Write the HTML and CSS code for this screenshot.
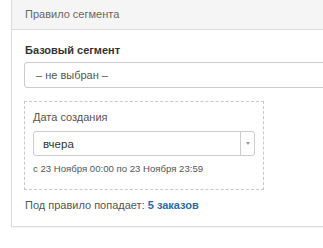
FILE: index.html
```html
<!DOCTYPE html>
<html lang="ru">
<head>
<meta charset="utf-8">
<link rel="stylesheet" href="styles.css">
</head>
<body>
<div class="panel">
  <div class="panel-head">Правило сегмента</div>
  <div class="panel-body">
    <div class="label">Базовый сегмент</div>
    <div class="select select-wide">– не выбран –</div>
    <div class="rule-box">
      <div class="rule-label">Дата создания</div>
      <div class="select select-date">
        <span class="select-value">вчера</span>
        <span class="select-arrow"><span class="tri"></span></span>
      </div>
      <div class="range">с 23 Ноября 00:00 по 23 Ноября 23:59</div>
    </div>
    <div class="summary">Под правило попадает: <a class="count" href="#">5 заказов</a></div>
  </div>
</div>
</body>
</html>
```

FILE: styles.css
```css
html, body {
  margin: 0;
  padding: 0;
  background: #fff;
  overflow: hidden;
}
body {
  font-family: "Liberation Sans", Arial, sans-serif;
  font-size: 11px;
  line-height: 16px;
  color: #333;
  width: 323px;
  height: 248px;
}
.panel {
  margin: -1px 0 0 11px;
  width: 340px;
  border: 1px solid #dcdcdc;
  background: #fff;
  box-shadow: 0 1px 1px rgba(0,0,0,0.04);
}
.panel-head {
  height: 30px;
  box-sizing: border-box;
  padding: 6px 13px 0;
  background: #f5f5f5;
  border-bottom: 1px solid #dcdcdc;
  color: #666;
}
.panel-body {
  padding: 12px 12px 13px 13px;
}
.label {
  font-weight: bold;
  color: #333;
}
.select {
  box-sizing: border-box;
  border: 1px solid #ccc;
  border-radius: 3px;
  background: #fff;
  color: #555;
}
.select-wide {
  margin-top: 4px;
  height: 26px;
  padding: 4px 11px;
  width: 340px;
  margin-left: -1px;
}
.rule-box {
  margin-top: 13px;
  margin-left: -1px;
  width: 240px;
  box-sizing: border-box;
  border: 1px dashed #c8c8c8;
  padding: 7px 8px 13px;
}
.rule-label {
  color: #555;
}
.select-date {
  margin-top: 6px;
  height: 25px;
  display: flex;
  align-items: stretch;
  color: #333;
}
.select-value {
  flex: 1;
  padding: 4px 9px;
  font-size: 11.5px;
}
.select-arrow {
  width: 13px;
  border-left: 1px solid #ccc;
  display: flex;
  align-items: center;
  justify-content: center;
}
.tri {
  width: 0;
  height: 0;
  border-left: 2.5px solid transparent;
  border-right: 2.5px solid transparent;
  border-top: 3px solid #999;
}
.range {
  margin-top: 6px;
  font-size: 9.6px;
  line-height: 14px;
  color: #555;
}
.summary {
  margin-top: 7px;
  color: #555;
}
.count {
  font-weight: bold;
  color: #2d6aa3;
  text-decoration: none;
}
```
